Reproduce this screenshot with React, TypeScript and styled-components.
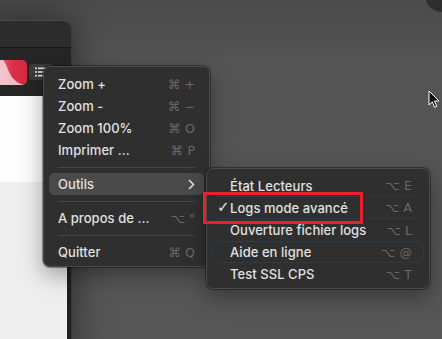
import React from "react";
import styled, { createGlobalStyle } from "styled-components";

const GlobalStyle = createGlobalStyle`
  html, body {
    margin: 0;
    padding: 0;
    background: #545454;
    overflow: hidden;
  }
  * {
    box-sizing: border-box;
  }
`;

const Desktop = styled.div`
  position: relative;
  width: 442px;
  height: 339px;
  overflow: hidden;
  background: linear-gradient(180deg, #4b4b4b 0%, #545454 18%, #565656 100%);
  font-family: Inter, "Noto Sans", "DejaVu Sans", sans-serif;
`;

const Corner = styled.div`
  position: absolute;
  left: 426px;
  top: -16px;
  width: 34px;
  height: 28px;
  border-radius: 50%;
  background: #2e2e2e;
`;

/* app window, cut off on the left */
const Window = styled.div`
  position: absolute;
  left: -20px;
  top: 20px;
  width: 92px;
  height: 340px;
  display: flex;
  flex-direction: column;
  background: #1f1f1f;
  border-radius: 0 10px 0 0;
  border-top: 1px solid #4a4a4a;
  border-right: 1px solid #3a3a3a;
  box-shadow: 0 0 36px rgba(0, 0, 0, 0.5);
  overflow: hidden;
`;

const TitleBar = styled.div`
  height: 27px;
  background: #2c2c2c;
  border-bottom: 1px solid #151515;
`;

const Toolbar = styled.div`
  height: 48px;
  display: flex;
  align-items: center;
  gap: 2px;
  padding-left: 15px;
  background: #262626;
`;

const AppIcon = styled.div`
  width: 32px;
  height: 25px;
  border-radius: 0 5px 5px 0;
  overflow: hidden;
  background: linear-gradient(90deg, #e9788a 0%, #d93047 55%, #d42a40 100%);
  svg {
    display: block;
  }
`;

const MenuButton = styled.div`
  width: 24px;
  height: 16px;
  border-radius: 4px;
  background: #3b3b3b;
  display: flex;
  align-items: center;
  justify-content: center;
`;

const Content = styled.div`
  flex: 1;
  margin-right: 4px;
  display: flex;
  flex-direction: column;
`;

const Pane = styled.div<{ $tone: string; $h?: number }>`
  background: ${(p) => p.$tone};
  height: ${(p) => (p.$h ? `${p.$h}px` : "auto")};
  flex: ${(p) => (p.$h ? "none" : 1)};
`;

const Menu = styled.div<{ $x: number; $y: number; $w: number }>`
  position: absolute;
  left: ${(p) => p.$x}px;
  top: ${(p) => p.$y}px;
  width: ${(p) => p.$w}px;
  padding: 6px 5px 3px;
  background: #2f2f2f;
  border: 1px solid #4b4b4b;
  border-radius: 7px;
  box-shadow: 0 0 0 1px rgba(0, 0, 0, 0.35), 0 8px 22px rgba(0, 0, 0, 0.35);
  display: flex;
  flex-direction: column;
`;

const Item = styled.div<{
  $active?: boolean;
  $left?: number;
  $right?: number;
  $ruled?: boolean;
  $outlined?: boolean;
}>`
  position: relative;
  height: 22px;
  display: flex;
  align-items: center;
  padding: 0 ${(p) => p.$right ?? 9}px 0 ${(p) => p.$left ?? 9}px;
  border-radius: 5px;
  background: ${(p) => (p.$active ? "#4a4a4a" : "transparent")};
  border-bottom: ${(p) => (p.$ruled ? "1px solid #2c3a44" : "none")};
  outline: ${(p) => (p.$outlined ? "1px solid #2c3b48" : "none")};
  outline-offset: -1px;
  color: #e0e0e0;
  font-size: 13px;
  font-weight: 500;
  letter-spacing: 0.05px;
  white-space: nowrap;
`;

const Label = styled.span`
  flex: 1;
`;

const Check = styled.span`
  position: absolute;
  left: 5px;
  top: 1px;
  font-family: "DejaVu Sans", sans-serif;
  font-size: 15px;
  font-weight: 700;
  color: #e6e6e6;
`;

const Shortcut = styled.span`
  color: #696969;
  font-family: "DejaVu Sans", Inter, sans-serif;
  font-size: 12.5px;
  display: flex;
  gap: 4px;
  align-items: center;
`;

const Separator = styled.div`
  height: 12px;
  display: flex;
  align-items: center;
  padding: 0 9px;
  &::after {
    content: "";
    flex: 1;
    height: 1px;
    background: #464646;
  }
`;

const Highlight = styled.div`
  position: absolute;
  left: 203px;
  top: 192px;
  width: 160px;
  height: 32px;
  border: 3px solid #e8222d;
`;

const Pointer = styled.svg`
  position: absolute;
  left: 428px;
  top: 90px;
`;

type Entry = { label: string; keys?: [string, string]; sep?: boolean };

const mainItems: Entry[] = [
  { label: "Zoom +", keys: ["⌘", "+"] },
  { label: "Zoom -", keys: ["⌘", "−"] },
  { label: "Zoom 100%", keys: ["⌘", "O"] },
  { label: "Imprimer ...", keys: ["⌘", "P"] },
  { label: "", sep: true },
  { label: "Outils" },
  { label: "", sep: true },
  { label: "A propos de ...", keys: ["⌥", "\""] },
  { label: "", sep: true },
  { label: "Quitter", keys: ["⌘", "Q"] },
];

const toolItems: Entry[] = [
  { label: "État Lecteurs", keys: ["⌥", "E"] },
  { label: "Logs mode avancé", keys: ["⌥", "A"] },
  { label: "Ouverture fichier logs", keys: ["⌥", "L"] },
  { label: "Aide en ligne", keys: ["⌥", "@"] },
  { label: "Test SSL CPS", keys: ["⌥", "T"] },
];

const Keys = ({ keys }: { keys: [string, string] }) => (
  <Shortcut>
    <span>{keys[0]}</span>
    <span>{keys[1]}</span>
  </Shortcut>
);

export default function App() {
  return (
    <>
      <GlobalStyle />
      <Desktop>
        <Corner />
        <Window>
          <TitleBar />
          <Toolbar>
            <AppIcon>
              <svg width="32" height="25" viewBox="0 0 32 25">
                <path
                  d="M0 0 H8 C12 4 13 12 17 17 C20 21 24 24 30 25 H0 Z"
                  fill="#f6d6dc"
                  opacity="0.85"
                />
              </svg>
            </AppIcon>
            <MenuButton>
              <svg width="12" height="10" viewBox="0 0 12 10">
                <g fill="#e6e6e6">
                  <rect x="0" y="0.5" width="2" height="1.6" />
                  <rect x="3" y="0.5" width="9" height="1.6" />
                  <rect x="0" y="4.2" width="2" height="1.6" />
                  <rect x="3" y="4.2" width="9" height="1.6" />
                  <rect x="0" y="7.9" width="2" height="1.6" />
                  <rect x="3" y="7.9" width="9" height="1.6" />
                </g>
              </svg>
            </MenuButton>
          </Toolbar>
          <Content>
            <Pane $tone="#fdfdfd" $h={86} />
            <Pane $tone="#eeeeee" />
          </Content>
        </Window>

        <Menu $x={43} $y={66} $w={167}>
          {mainItems.map((it, i) =>
            it.sep ? (
              <Separator key={i} />
            ) : (
              <Item key={i} $active={it.label === "Outils"}>
                <Label>{it.label}</Label>
                {it.keys ? (
                  <Keys keys={it.keys} />
                ) : (
                  <svg width="7" height="11" viewBox="0 0 7 11">
                    <path
                      d="M1.5 1.5 L5.5 5.5 L1.5 9.5"
                      stroke="#e0e0e0"
                      strokeWidth="1.7"
                      fill="none"
                      strokeLinecap="round"
                      strokeLinejoin="round"
                    />
                  </svg>
                )}
              </Item>
            )
          )}
        </Menu>

        <Menu $x={206} $y={168} $w={224}>
          {toolItems.map((it, i) => (
            <Item
              key={i}
              $left={18}
              $right={12}
              $ruled={i < 2}
              $outlined={it.label === "Aide en ligne"}
            >
              {i === 1 && <Check>✓</Check>}
              <Label>{it.label}</Label>
              {it.keys && <Keys keys={it.keys} />}
            </Item>
          ))}
        </Menu>

        <Highlight />

        <Pointer width="12" height="19" viewBox="0 0 12 19">
          <path
            d="M1 1 L1 15 L4.3 11.8 L6.6 17.3 L8.8 16.4 L6.5 11 L11 11 Z"
            fill="#111"
            stroke="#fff"
            strokeWidth="1"
            strokeLinejoin="round"
          />
        </Pointer>
      </Desktop>
    </>
  );
}
